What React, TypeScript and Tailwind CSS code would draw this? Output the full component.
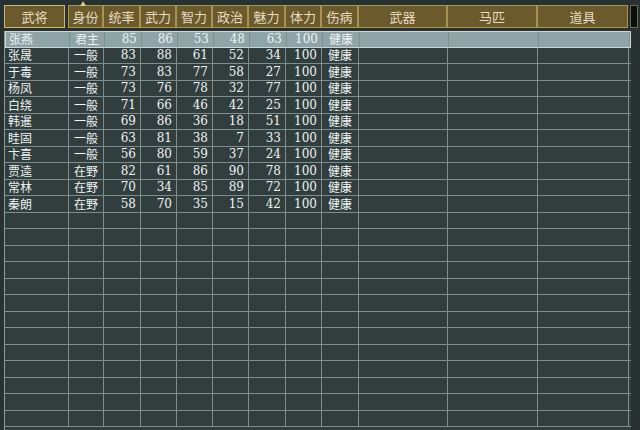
const cols = [
  { h: "武将", w: 61, a: "left" },
  { h: "身份", w: 35, a: "center" },
  { h: "统率", w: 37, a: "right" },
  { h: "武力", w: 36, a: "right" },
  { h: "智力", w: 36, a: "right" },
  { h: "政治", w: 36, a: "right" },
  { h: "魅力", w: 37, a: "right" },
  { h: "体力", w: 36, a: "right" },
  { h: "伤病", w: 37, a: "center" },
  { h: "武器", w: 89, a: "center" },
  { h: "马匹", w: 90, a: "center" },
  { h: "道具", w: 91, a: "center" },
];
const data = [
  ["张燕", "君主", 85, 86, 53, 48, 63, 100, "健康"],
  ["张晟", "一般", 83, 88, 61, 52, 34, 100, "健康"],
  ["于毒", "一般", 73, 83, 77, 58, 27, 100, "健康"],
  ["杨凤", "一般", 73, 76, 78, 32, 77, 100, "健康"],
  ["白绕", "一般", 71, 66, 46, 42, 25, 100, "健康"],
  ["韩暹", "一般", 69, 86, 36, 18, 51, 100, "健康"],
  ["眭固", "一般", 63, 81, 38, 7, 33, 100, "健康"],
  ["卞喜", "一般", 56, 80, 59, 37, 24, 100, "健康"],
  ["贾逵", "在野", 82, 61, 86, 90, 78, 100, "健康"],
  ["常林", "在野", 70, 34, 85, 89, 72, 100, "健康"],
  ["秦朗", "在野", 58, 70, 35, 15, 42, 100, "健康"],
];
const rows = Array.from({ length: 24 }, (_, i) => data[i] || []);
const font = { fontFamily: '"Noto Sans CJK SC", sans-serif' };
const num = { fontFamily: '"DejaVu Serif", "Liberation Serif", serif' };

export default function App() {
  return (
    <div className="w-[640px] h-[430px] bg-[#27312f] overflow-hidden flex flex-col pl-[4px] pt-[5px]" style={font}>
      <div className="flex h-[23px] items-stretch">
        {cols.map((c, i) => (
          <div key={i} style={{ width: c.w }} className={`relative flex items-center justify-center bg-[#6b5a2c] border border-[#a89350] text-[#e6dcc0] text-[13px] ${i === 0 ? "mr-[3px] border-[#cbb870]" : ""}`}>
            {c.h}
            {i === 1 && <span className="absolute top-[-5px] left-[11px] text-[6px] leading-none text-[#e8d080]">▲</span>}
          </div>
        ))}
        <div className="w-[8px] ml-[2px] bg-[#0b0d0c] border border-[#6b6b50]" />
      </div>
      <div className="mt-[3px] flex-1 w-[627px] border-l border-[#8a9c9c] bg-[#313e3d]">
        {rows.map((r, ri) => (
          <div key={ri} className={`flex h-[16.5px] border-b border-[#7b8f8f] ${ri === 0 ? "bg-[#8fa4a8] border border-[#c8d6d8]" : ""}`}>
            {cols.map((c, ci) => {
              const v = r[ci];
              const isNum = typeof v === "number";
              return (
                <div key={ci} style={{ width: c.w + (ci === 0 ? 3 : 0), ...(isNum ? num : {}) }}
                  className={`flex items-center overflow-hidden border-r border-[#7b8f8f] text-[12px] leading-none text-[#eef2f2] ${c.a === "left" ? "justify-start pl-[3px]" : c.a === "right" ? "justify-end pr-[4px]" : "justify-center"}`}>
                  {v !== undefined ? String(v) : ""}
                </div>
              );
            })}
          </div>
        ))}
      </div>
    </div>
  );
}
